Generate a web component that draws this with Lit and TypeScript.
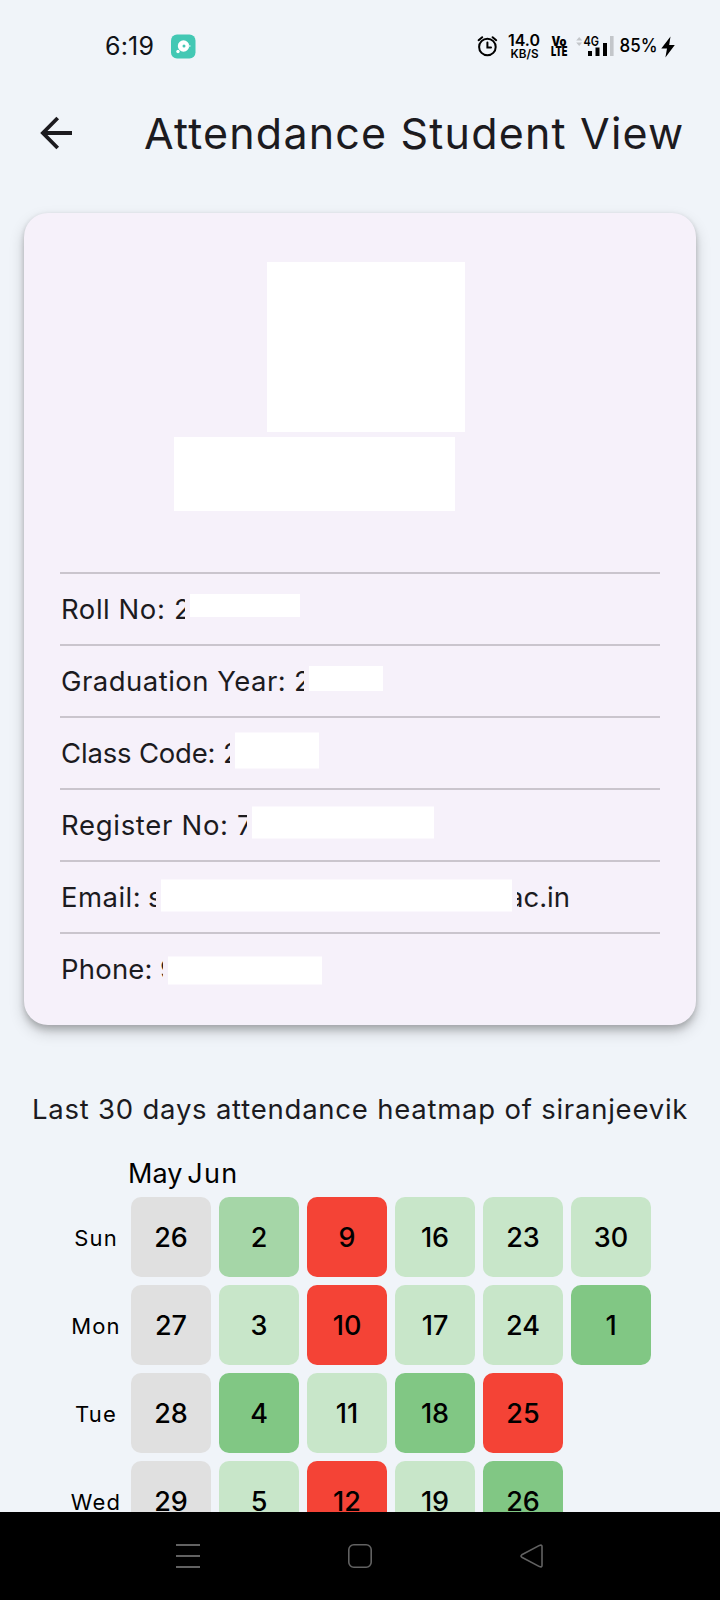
import { LitElement, html, css, svg } from "lit";
import { customElement } from "lit/decorators.js";
import { classMap } from "lit/directives/class-map.js";
import { styleMap } from "lit/directives/style-map.js";

interface Field {
  label: string;
  labelWidth: number;
  spacing: number;
  first: string;
  firstWidth: number;
  box: [number, number, number];
  tail?: string;
}

// box: width, height, vertical shift from the row's middle
const FIELDS: Field[] = [
  { label: "Roll No:", labelWidth: 113, spacing: 0.55, first: "2", firstWidth: 11, box: [110, 23, -4] },
  { label: "Graduation Year:", labelWidth: 233, spacing: 0.48, first: "2", firstWidth: 10, box: [74, 25, -3] },
  { label: "Class Code:", labelWidth: 162, spacing: -0.18, first: "2", firstWidth: 7, box: [84, 36, -2.5] },
  { label: "Register No:", labelWidth: 176, spacing: 0.7, first: "7", firstWidth: 10, box: [182, 32, -2.5] },
  { label: "Email:", labelWidth: 87, spacing: 0.45, first: "s", firstWidth: 8, box: [351, 32, -1.5], tail: "ac.in" },
  { label: "Phone:", labelWidth: 99, spacing: 0.2, first: "9", firstWidth: 3, box: [154, 28, 1.5] },
];

type Level = "none" | "low" | "mid" | "high" | "absent";
const WEEK: { day: string; cells: [number, Level][] }[] = [
  { day: "Sun", cells: [[26, "none"], [2, "mid"], [9, "absent"], [16, "low"], [23, "low"], [30, "low"]] },
  { day: "Mon", cells: [[27, "none"], [3, "low"], [10, "absent"], [17, "low"], [24, "low"], [1, "high"]] },
  { day: "Tue", cells: [[28, "none"], [4, "high"], [11, "low"], [18, "high"], [25, "absent"]] },
  { day: "Wed", cells: [[29, "none"], [5, "low"], [12, "absent"], [19, "low"], [26, "high"]] },
];

@customElement("status-bar")
class StatusBar extends LitElement {
  static styles = css`
    :host { display: flex; height: 92px; padding: 0 0 0 105px; box-sizing: border-box; align-items: center; color: #111318; }
    .clock { font-size: 25px; line-height: 30px; width: 66px; letter-spacing: 0.2px; }
    .app { display: block; }
    .right { display: block; margin-left: auto; }
  `;
  render() {
    return html`
      <span class="clock">6:19</span>
      <svg class="app" width="25" height="25" viewBox="0 0 25 25">
        <rect x="0" y="0.5" width="24.5" height="24" rx="6" fill="#43c8b4" />
        <circle cx="12.5" cy="12" r="5.7" fill="#fff" />
        <circle cx="13" cy="12" r="1.5" fill="#43c8b4" />
        <circle cx="7" cy="17.5" r="1.7" fill="#fff" />
        <circle cx="18.6" cy="12" r="1.1" fill="#b9ebe3" />
      </svg>
      <svg class="right" width="250" height="40" viewBox="470 26 250 40" font-family="Inter, sans-serif" fill="#000">
        <g fill="none" stroke="#000" stroke-width="2" stroke-linecap="round">
          <circle cx="487.4" cy="47" r="8.3" />
          <path d="M487.4 42.5V47.4H491" />
          <path d="M478.6 40.2L482.2 37.2M496.2 40.2L492.6 37.2" />
        </g>
        <text x="508" y="46.3" font-size="15.5" font-weight="600" textLength="32" lengthAdjust="spacingAndGlyphs">14.0</text>
        <text x="510.5" y="57.6" font-size="12" font-weight="600" textLength="28" lengthAdjust="spacingAndGlyphs">KB/S</text>
        <text x="551.5" y="45.6" font-size="12.5" font-weight="900" textLength="15" lengthAdjust="spacingAndGlyphs">Vo</text>
        <text x="551" y="56.2" font-size="12.5" font-weight="900" textLength="16.5" lengthAdjust="spacingAndGlyphs">LTE</text>
        <path d="M576.2 40.5L579.2 37L582.2 40.5ZM576.2 42.5L579.2 46L582.2 42.5Z" fill="#c3c6ca" />
        <text x="583.5" y="46" font-size="13.5" font-weight="600" textLength="15.5" lengthAdjust="spacingAndGlyphs">4G</text>
        ${[[588, 51], [595.5, 47.5], [603, 43]].map(([x, y]) => svg`<rect x=${x} y=${y} width="4" height=${56 - y} />`)}
        <rect x="610" y="36" width="3.6" height="20" fill="#c3c6ca" />
        <text x="619.5" y="52.2" font-size="18.5" font-weight="500" textLength="38" lengthAdjust="spacingAndGlyphs">85%</text>
        <path d="M670.5 36.5L661.3 48.6H667L665.4 57.5L674.8 45H669.2Z" />
      </svg>
    `;
  }
}

@customElement("profile-card")
class ProfileCard extends LitElement {
  static styles = css`
    :host {
      display: flex; flex-direction: column; box-sizing: border-box; height: 812px;
      margin: 0 24px; padding: 49px 36px 0; border-radius: 24px; background: #f6f1fa;
      box-shadow: 0 0 4px rgba(0, 0, 0, 0.06), 0 5px 6px rgba(0, 0, 0, 0.16), 0 7px 15px rgba(0, 0, 0, 0.18);
    }
    .photo { width: 198px; height: 170px; margin-left: 207px; background: #fff; }
    .name { width: 281px; height: 74px; margin: 5px 0 61px 114px; background: #fff; }
    .row { display: flex; align-items: center; box-sizing: border-box; height: 72px; border-top: 2px solid #cac5cd; padding-left: 1px; font-size: 27.5px; line-height: 40px; white-space: pre; }
    .label { flex: none; }
    .first, .tail { flex: none; overflow: hidden; }
    .tail { display: flex; justify-content: flex-end; width: 53px; margin-left: 5px; }
    .mask { flex: none; margin-left: 5px; background: #fff; }
  `;
  render() {
    return html`
      <div class="photo"></div>
      <div class="name"></div>
      ${FIELDS.map(
        (f) => html`<div class="row">
          <span class="label" style=${styleMap({ width: f.labelWidth + "px", letterSpacing: f.spacing + "px" })}>${f.label}</span
          ><span class="first" style=${styleMap({ width: f.firstWidth + "px" })}>${f.first}</span
          ><span class="mask" style=${styleMap({ width: f.box[0] + "px", height: f.box[1] + "px", transform: `translateY(${f.box[2]}px)` })}></span
          >${f.tail ? html`<span class="tail">${f.tail}</span>` : ""}
        </div>`
      )}
    `;
  }
}

@customElement("attendance-heatmap")
class AttendanceHeatmap extends LitElement {
  static styles = css`
    :host { display: block; padding: 64px 0 0 32px; color: #000; }
    .title { font-size: 27.5px; line-height: 40px; height: 40px; white-space: nowrap; color: #1c1b1f; letter-spacing: 0.77px; }
    .months { display: flex; gap: 5px; box-sizing: border-box; padding: 25px 0 0 96px; height: 67.5px; font-size: 27px; line-height: 40px; }
    .months span + span { letter-spacing: 1.3px; }
    .grid { display: flex; flex-direction: column; gap: 8px; }
    .week { display: grid; grid-template-columns: 64px repeat(6, 80px); column-gap: 8px; padding-left: 27px; height: 80px; }
    .day { display: flex; align-items: center; justify-content: center; padding-top: 3px; margin: 0 -10px; transform: translateX(5px); font-size: 22px; letter-spacing: 1.2px; }
    .cell { display: flex; align-items: center; justify-content: center; box-sizing: border-box; padding-top: 1px; border-radius: 10px; font-size: 27px; font-weight: 500; }
    .none { background: #e0e0e0; }
    .low { background: #c8e6c9; }
    .mid { background: #a5d6a7; }
    .high { background: #81c784; }
    .absent { background: #f44336; }
  `;
  render() {
    return html`
      <div class="title">Last 30 days attendance heatmap of siranjeevik</div>
      <div class="months"><span>May</span><span>Jun</span></div>
      <div class="grid">
        ${WEEK.map(
          (w) => html`<div class="week">
            <span class="day">${w.day}</span>
            ${w.cells.map(([n, level]) => html`<span class=${classMap({ cell: true, [level]: true })}>${n}</span>`)}
          </div>`
        )}
      </div>
    `;
  }
}

@customElement("app-root")
class AppRoot extends LitElement {
  static styles = css`
    :host { display: flex; flex-direction: column; width: 720px; height: 1600px; overflow: hidden; background: #f0f4f9; color: #1c1b1f; font-family: Inter, "Open Sans", sans-serif; }
    .bar { display: flex; align-items: center; height: 82px; padding-left: 40px; margin-bottom: 39px; flex: none; }
    .bar svg { flex: none; }
    .heading { margin-left: 71px; font-size: 43px; line-height: 60px; white-space: nowrap; letter-spacing: 1.18px; }
    status-bar, profile-card { flex: none; }
    .body { flex: 1; min-height: 0; overflow: hidden; }
    .nav { flex: none; display: flex; align-items: center; justify-content: center; gap: 146px; height: 88px; background: #000; }
    .nav svg { display: block; fill: none; stroke: #626262; stroke-width: 1.6; }
  `;
  render() {
    return html`
      <status-bar></status-bar>
      <header class="bar">
        <svg width="33" height="34" viewBox="0 0 33 34" fill="none" stroke="#1c1b1f" stroke-width="3.8">
          <path d="M32 17H3.5M17.7 2L2.9 17L17.7 32" />
        </svg>
        <span class="heading">Attendance Student View</span>
      </header>
      <profile-card></profile-card>
      <main class="body"><attendance-heatmap></attendance-heatmap></main>
      <nav class="nav">
        <svg width="26" height="26" viewBox="0 0 26 26"><path stroke-width="2" d="M1 2H25M1 13H25M1 24H25" /></svg>
        <svg width="26" height="26" viewBox="0 0 26 26"><rect x="1.8" y="1.8" width="22.4" height="22.4" rx="5" /></svg>
        <svg width="26" height="26" viewBox="0 0 26 26"><path stroke-linejoin="round" d="M2.8 11.8Q1.2 13 2.8 14.2L20.5 23.6Q23 24.6 23 22.4V3.6Q23 1.4 20.5 2.4Z" /></svg>
      </nav>
    `;
  }
}
